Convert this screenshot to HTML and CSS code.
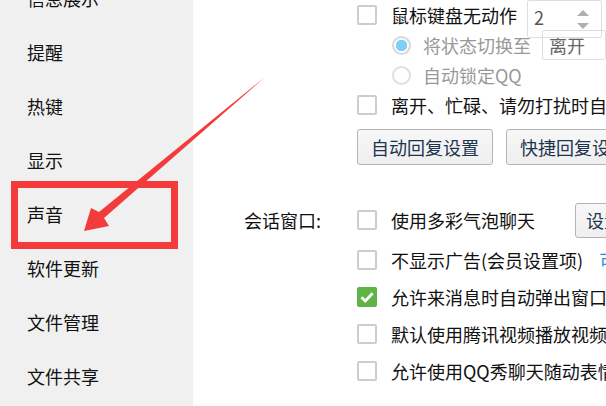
FILE: index.html
```html
<!DOCTYPE html>
<html lang="zh-CN">
<head>
    <meta charset="UTF-8">
    <title>系统设置</title>
    <link rel="stylesheet" href="styles.css">
</head>
<body>
<div class="page">
    <ul class="side">
        <li>信息展示</li>
        <li>提醒</li>
        <li>热键</li>
        <li>显示</li>
        <li>声音</li>
        <li>软件更新</li>
        <li>文件管理</li>
        <li>文件共享</li>
    </ul>
    <div class="main">
        <div class="status">
            <div class="row r1">
                <span class="box"></span>
                <span class="txt">鼠标键盘无动作</span>
                <div class="spin">
                    <span>2</span>
                    <i class="up"></i><i class="down"></i>
                </div>
            </div>
            <div class="row sub r2">
                <span class="radio on"></span>
                <span class="txt gray">将状态切换至</span>
                <div class="select">离开</div>
            </div>
            <div class="row sub">
                <span class="radio"></span>
                <span class="txt gray">自动锁定QQ</span>
            </div>
            <div class="row r4">
                <span class="box"></span>
                <span class="txt">离开、忙碌、请勿打扰时自动回复</span>
            </div>
            <div class="btns">
                <button class="btn">自动回复设置</button>
                <button class="btn">快捷回复设置</button>
            </div>
        </div>
        <div class="session">
            <div class="label">会话窗口:</div>
            <div class="opts">
                <div class="row tall">
                    <span class="box"></span>
                    <span class="txt">使用多彩气泡聊天</span>
                    <button class="btn small">设置</button>
                </div>
                <div class="row">
                    <span class="box"></span>
                    <span class="txt">不显示广告(会员设置项)</span>
                    <span class="link">可设置</span>
                </div>
                <div class="row">
                    <span class="box checked">
                        <svg width="20" height="20" viewBox="0 0 20 20"><path d="M4.5 10.2l3.8 3.8L15.6 6.2" fill="none" stroke="#fff" stroke-width="2.8"/></svg>
                    </span>
                    <span class="txt">允许来消息时自动弹出窗口</span>
                </div>
                <div class="row">
                    <span class="box"></span>
                    <span class="txt">默认使用腾讯视频播放视频</span>
                </div>
                <div class="row">
                    <span class="box"></span>
                    <span class="txt">允许使用QQ秀聊天随动表情</span>
                </div>
            </div>
        </div>
    </div>
</div>
<!-- 标注 -->
<svg class="mark" width="606" height="406" viewBox="0 0 606 406">
    <rect x="14.5" y="184.5" width="160" height="61" fill="none" stroke="#f43b3b" stroke-width="7"/>
    <polygon points="265,77 104,218 109,226 84,231 91,208 99,212" fill="#f43b3b"/>
</svg>
</body>
</html>
```

FILE: styles.css
```css
html, body {
    margin: 0;
    width: 606px;
    height: 406px;
    overflow: hidden;
    background: #fff;
    font-family: "Noto Sans CJK SC", "Noto Sans", sans-serif;
    font-size: 18px;
    color: #111;
}
.page {
    display: flex;
    height: 406px;
}
.side {
    flex: none;
    width: 193px;
    margin: 0;
    padding: 0;
    list-style: none;
    background: #f0f0f0;
}
.side li {
    height: 54px;
    line-height: 54px;
    padding-left: 27px;
    white-space: nowrap;
}
.side li:first-child {
    margin-top: -29px;
}
.main {
    flex: 1;
    padding-left: 51px;
    white-space: nowrap;
    overflow: hidden;
}
.status {
    padding-left: 113px;
}
.row {
    display: flex;
    align-items: center;
    height: 30px;
}
.row + .row {
    margin-top: 7px;
}
.status .row + .row {
    margin-top: 0;
}
.status .r2 {
    margin-top: 12px;
}
.status .r4 {
    margin-top: 9px;
}
.sub {
    padding-left: 35px;
}
.box {
    flex: none;
    box-sizing: border-box;
    width: 20px;
    height: 20px;
    border: 2px solid #cdcdcd;
    border-radius: 2px;
    background: #fff;
}
.box.checked {
    border: none;
    background: #5fb446;
}
.box svg {
    display: block;
}
.radio {
    flex: none;
    box-sizing: border-box;
    width: 19px;
    height: 19px;
    border: 2px solid #e0e0e0;
    border-radius: 50%;
    background: #fff;
}
.radio.on {
    border-color: #d8d8d8;
    background: radial-gradient(circle, #7fd0f8 0 5.5px, #fff 6px);
}
.txt {
    margin-left: 14px;
    line-height: 30px;
}
.sub .txt {
    margin-left: 12px;
}
.gray {
    color: #999;
}
.spin {
    position: relative;
    align-self: flex-start;
    box-sizing: border-box;
    width: 75px;
    height: 38px;
    margin: 0 0 0 10px;
    padding-left: 6px;
    border: 1px solid #dedede;
    border-radius: 2px;
    line-height: 32px;
    color: #555;
}
.spin .up, .spin .down {
    position: absolute;
    right: 12px;
    width: 0;
    height: 0;
    border-left: 6px solid transparent;
    border-right: 6px solid transparent;
}
.spin .up {
    top: 9px;
    border-bottom: 6px solid #b0b0b0;
}
.spin .down {
    top: 22px;
    border-top: 6px solid #b0b0b0;
}
.select {
    box-sizing: border-box;
    width: 80px;
    height: 30px;
    margin-left: 11px;
    padding-left: 6px;
    border: 1px solid #dedede;
    border-radius: 2px;
    line-height: 28px;
    color: #666;
}
.btns {
    display: flex;
    gap: 13px;
    margin-top: 9px;
}
.btn {
    flex: none;
    box-sizing: border-box;
    width: 136px;
    height: 36px;
    padding: 0;
    border: 1px solid #b4b4b4;
    border-radius: 3px;
    background: linear-gradient(#f7f7f7, #efefef);
    font: inherit;
    color: #1d3450;
    text-align: center;
}
.btn.small {
    width: 70px;
    height: 35px;
    margin-left: 40px;
    text-align: left;
    padding-left: 10px;
}
.session {
    display: flex;
    margin-top: 37px;
}
.label {
    flex: none;
    width: 113px;
    line-height: 36px;
}
.row.tall {
    height: 36px;
}
.link {
    margin-left: 16px;
    color: #1e90d8;
}
.mark {
    position: absolute;
    left: 0;
    top: 0;
    pointer-events: none;
}
```
